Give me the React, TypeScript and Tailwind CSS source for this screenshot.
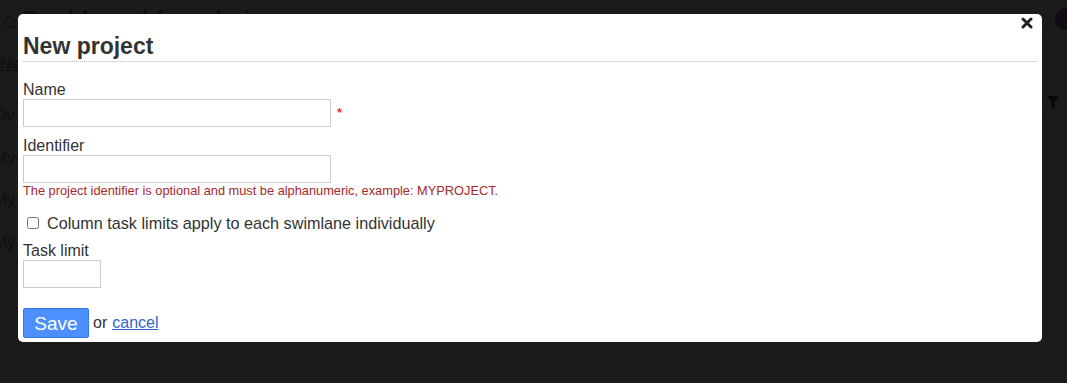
export default function App() {
  return (
    <div className="relative h-[383px] w-[1067px] overflow-hidden bg-[#1b1b1b] font-['Liberation_Sans',Arial,sans-serif] text-[#333]">
      {/* Page behind the overlay */}
      <div className="text-[#0e0e0e]">
        <div className="flex h-[40px] items-center border-b border-[#151515] pl-[2px]">
          <span className="text-[24px] font-bold">⌂ Dashboard for admin</span>
        </div>
        <div className="w-[18px] overflow-hidden">
          <div className="mt-[12px] text-[16px] underline">New</div>
          <div className="mt-[28px] flex flex-col gap-[18px] text-[16px]">
            <span className="-ml-[6px]">Ov</span>
            <span className="-ml-[6px]">My</span>
            <span className="-ml-[6px]">My</span>
            <span className="-ml-[6px]">My</span>
          </div>
        </div>
      </div>
      <div className="absolute top-[8px] right-[-10px] h-[22px] w-[22px] rounded-full bg-[#120a14]" />
      <div className="absolute top-[96px] right-[8px] h-[14px] w-[12px] text-[#080808]">
        <svg viewBox="0 0 12 14" className="h-full w-full" fill="currentColor">
          <path d="M0 0h12L7.5 6v8L4.5 11V6z" />
        </svg>
      </div>
      <div className="absolute top-[115px] right-0 h-px w-[30px] bg-[#151515]" />

      {/* Modal */}
      <div className="absolute top-[14px] left-[18px] w-[1024px] rounded-[5px] bg-white px-[5px] pt-[18px] pb-[4px]">
        <button className="absolute top-[3px] right-[9px] h-[12px] w-[12px] text-[#222]" aria-label="Close">
          <svg viewBox="0 0 12 12" className="h-full w-full" fill="none" stroke="currentColor" strokeWidth="3" strokeLinecap="round">
            <path d="M2 2l8 8M10 2l-8 8" />
          </svg>
        </button>

        <h2 className="border-b border-dotted border-[#bbb] text-[23px] leading-[29px] font-bold text-[#333]">New project</h2>

        <form className="text-[16px] text-[#333]">
          <label className="mt-[19px] block leading-[18px]">Name</label>
          <div className="flex items-center">
            <input className="h-[28px] w-[308px] border border-[#ccc] px-[4px] outline-none" />
            <span className="ml-[6px] text-[13px] font-bold text-[#e33]">*</span>
          </div>

          <label className="mt-[10px] block leading-[18px]">Identifier</label>
          <input className="block h-[28px] w-[308px] border border-[#ccc] px-[4px] outline-none" />
          <p className="text-[12.8px] leading-[15px] text-[#a52a2a]">
            The project identifier is optional and must be alphanumeric, example: MYPROJECT.
          </p>

          <label className="mt-[15px] flex h-[20px] items-center text-[16.2px]">
            <input type="checkbox" className="mr-[8px] ml-[4px] h-[12px] w-[12px]" />
            Column task limits apply to each swimlane individually
          </label>

          <label className="mt-[9px] block leading-[18px]">Task limit</label>
          <input className="block h-[28px] w-[78px] border border-[#ccc] px-[4px] outline-none" />

          <div className="mt-[20px] flex items-center">
            <button
              type="button"
              className="h-[30px] w-[66px] rounded-[2px] border border-[#3079ed] bg-[#4d8ffe] text-[19px] leading-none text-white"
            >
              Save
            </button>
            <span className="ml-[4px]">or</span>
            <a href="#" className="ml-[5px] text-[#3366cc] underline">cancel</a>
          </div>
        </form>
      </div>
    </div>
  );
}
